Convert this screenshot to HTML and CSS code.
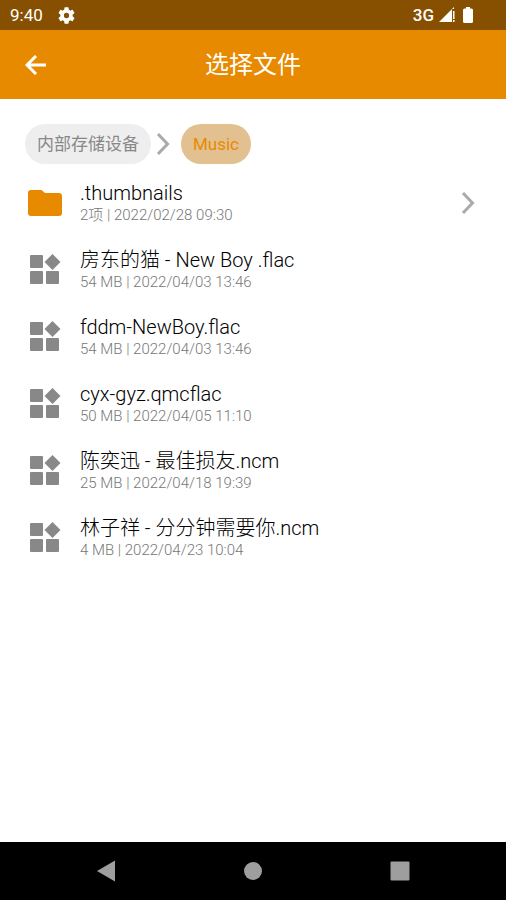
FILE: index.html
```
<!DOCTYPE html>
<html lang="zh-CN">
<head>
  <meta charset="UTF-8">
  <meta name="viewport" content="width=device-width, initial-scale=1.0">
  <title>选择文件</title>
  <link rel="stylesheet" href="styles.css">
</head>
<body>
  <svg width="0" height="0" class="symbols" aria-hidden="true">
    <symbol id="file" viewBox="0 0 32 32">
      <rect x="1" y="1" width="13" height="13" rx="1"/>
      <rect x="1" y="17" width="13" height="13" rx="1"/>
      <rect x="17" y="17" width="13" height="13" rx="1"/>
      <path d="M23.500 0l8 8-8 8-8-8z"/>
    </symbol>
    <symbol id="chevron" viewBox="0 0 16 24">
      <path d="M3 2l9.500 10L3 22" fill="none" stroke="currentColor" stroke-width="3"/>
    </symbol>
  </svg>

  <div class="status-bar">
    <span class="time">9:40</span>
    <svg class="gear" viewBox="2 2 20 20"><path d="M19.140 12.940c.04-.3.060-.61.060-.94 0-.32-.02-.64-.07-.94l2.030-1.580a.49.49 0 0 0 .12-.61l-1.920-3.320a.49.49 0 0 0-.59-.22l-2.390.96c-.5-.38-1.030-.7-1.620-.94l-.36-2.540a.48.48 0 0 0-.48-.41h-3.840a.47.47 0 0 0-.47.41l-.36 2.540c-.59.24-1.130.57-1.620.94l-2.390-.96a.48.48 0 0 0-.59.22L2.740 8.870a.48.48 0 0 0 .12.61l2.030 1.580c-.05.3-.09.63-.09.94s.02.64.07.94l-2.030 1.580a.49.49 0 0 0-.12.61l1.920 3.320c.12.22.37.29.59.22l2.390-.96c.5.38 1.030.7 1.620.94l.36 2.540c.05.24.24.41.48.41h3.840c.24 0 .44-.17.47-.41l.36-2.540c.59-.24 1.130-.56 1.620-.94l2.390.96c.22.08.47 0 .59-.22l1.920-3.320a.47.47 0 0 0-.12-.61zM12 15.100a3.100 3.100 0 1 1 0-6.200 3.100 3.100 0 0 1 0 6.200z"/></svg>
    <span class="network">3G</span>
    <svg class="signal" viewBox="0 0 16 16"><path d="M0 15L15 0v2h-2v13zM14 4h1.500v8H14zM14 13h1.500v2H14z"/></svg>
    <svg class="battery" viewBox="0 0 12 18"><path d="M4 1h4v1.500h1.500Q11 2.500 11 4v11.500Q11 17 9.500 17h-7Q1 17 1 15.500V4Q1 2.500 2.500 2.500H4z"/></svg>
  </div>

  <header class="app-bar">
    <button class="back" type="button" aria-label="返回">
      <svg viewBox="0 0 22 20"><path d="M21 10H3M11 1L2 10l9 9" fill="none" stroke="currentColor" stroke-width="3"/></svg>
    </button>
    <h1>选择文件</h1>
  </header>

  <main>
    <nav class="crumbs">
      <a class="crumb" href="#">内部存储设备</a>
      <svg class="chevron"><use href="#chevron"/></svg>
      <a class="crumb current" href="#">Music</a>
    </nav>

    <ul class="files">
      <li>
        <svg class="icon folder" viewBox="0 0 34 32"><path d="M3 3h10.500l3.500 3h14q3 0 3 3v17q0 3-3 3H3q-3 0-3-3V6q0-3 3-3z"/></svg>
        <div class="info">
          <div class="name">.thumbnails</div>
          <div class="meta">2项 | 2022/02/28 09:30</div>
        </div>
        <svg class="chevron"><use href="#chevron"/></svg>
      </li>
      <li>
        <svg class="icon"><use href="#file"/></svg>
        <div class="info">
          <div class="name">房东的猫 - New Boy .flac</div>
          <div class="meta">54 MB | 2022/04/03 13:46</div>
        </div>
      </li>
      <li>
        <svg class="icon"><use href="#file"/></svg>
        <div class="info">
          <div class="name">fddm-NewBoy.flac</div>
          <div class="meta">54 MB | 2022/04/03 13:46</div>
        </div>
      </li>
      <li>
        <svg class="icon"><use href="#file"/></svg>
        <div class="info">
          <div class="name">cyx-gyz.qmcflac</div>
          <div class="meta">50 MB | 2022/04/05 11:10</div>
        </div>
      </li>
      <li>
        <svg class="icon"><use href="#file"/></svg>
        <div class="info">
          <div class="name">陈奕迅 - 最佳损友.ncm</div>
          <div class="meta">25 MB | 2022/04/18 19:39</div>
        </div>
      </li>
      <li>
        <svg class="icon"><use href="#file"/></svg>
        <div class="info">
          <div class="name">林子祥 - 分分钟需要你.ncm</div>
          <div class="meta">4 MB | 2022/04/23 10:04</div>
        </div>
      </li>
    </ul>
  </main>

  <div class="nav-bar">
    <button type="button" aria-label="后退"><svg viewBox="0 0 20 22"><path d="M19 .5v21L1 11z"/></svg></button>
    <button type="button" aria-label="主页"><svg viewBox="0 0 20 22"><circle cx="10" cy="11" r="9"/></svg></button>
    <button type="button" aria-label="最近任务"><svg viewBox="0 0 20 22"><rect x=".5" y="1.500" width="19" height="19" rx="1"/></svg></button>
  </div>
</body>
</html>
```

FILE: styles.css
```
* {
  box-sizing: border-box;
}
body {
  margin: 0;
  min-height: 100vh;
  display: flex;
  flex-direction: column;
  background-color: #fff;
  font-family: Roboto, "Noto Sans CJK SC", sans-serif;
}
svg {
  display: block;
  flex: none;
  fill: currentColor;
}
button {
  padding: 0;
  border: none;
  background: none;
  color: inherit;
  cursor: pointer;
}
.symbols {
  position: absolute;
}

.status-bar {
  display: flex;
  align-items: center;
  height: 30px;
  padding: 0 32px 0 10px;
  background-color: #865000;
  color: #fff;
  font-size: 17px;
}
.gear {
  width: 17px;
  height: 17px;
  margin-left: 15px;
}
.network {
  margin-left: auto;
  font-weight: 500;
}
.signal {
  width: 16px;
  height: 16px;
  margin: 0 7px 0 5px;
}
.battery {
  width: 12px;
  height: 18px;
}

.app-bar {
  display: grid;
  grid-template-columns: 48px 1fr 48px;
  align-items: center;
  height: 69px;
  padding: 0 12px;
  background-color: #e88a00;
  color: #fff;
}
.back {
  display: flex;
  align-items: center;
  justify-content: center;
  height: 48px;
}
.back svg {
  width: 22px;
  height: 20px;
}
h1 {
  margin: 0;
  font-size: 24px;
  line-height: 32px;
  font-weight: 400;
  text-align: center;
}

main {
  flex: 1;
  padding: 25px 30px 25px 25px;
}
.crumbs {
  display: flex;
  align-items: center;
}
.crumb {
  padding: 0 12px;
  border-radius: 20px;
  background-color: #eee;
  color: #888;
  font-size: 17px;
  line-height: 40px;
  text-decoration: none;
}
.crumb.current {
  background-color: #e3c08f;
  color: #e88a00;
}
.chevron {
  width: 16px;
  height: 24px;
  color: #aaa;
}
.crumbs .chevron {
  margin: 0 10px 0 4px;
}

.files {
  margin: 5px 0 0;
  padding: 0;
  list-style: none;
}
.files li {
  display: flex;
  align-items: center;
  height: 67px;
  padding-left: 4px;
}
.icon {
  width: 32px;
  height: 32px;
  color: #888;
}
.folder {
  width: 34px;
  margin-left: -1px;
  margin-right: -1px;
  color: #e88a00;
}
.info {
  flex: 1;
  margin-left: 19px;
}
.name {
  color: #000;
  font-size: 20px;
  line-height: 24px;
  font-weight: 300;
}
.meta {
  color: #777;
  font-size: 15px;
  line-height: 20px;
  font-weight: 300;
}

.nav-bar {
  display: grid;
  grid-template-columns: repeat(3, 1fr);
  height: 58px;
  padding: 0 33px;
  background-color: #000;
  color: #9e9e9e;
}
.nav-bar button {
  display: flex;
  align-items: center;
  justify-content: center;
}
.nav-bar svg {
  width: 20px;
  height: 22px;
}
```
